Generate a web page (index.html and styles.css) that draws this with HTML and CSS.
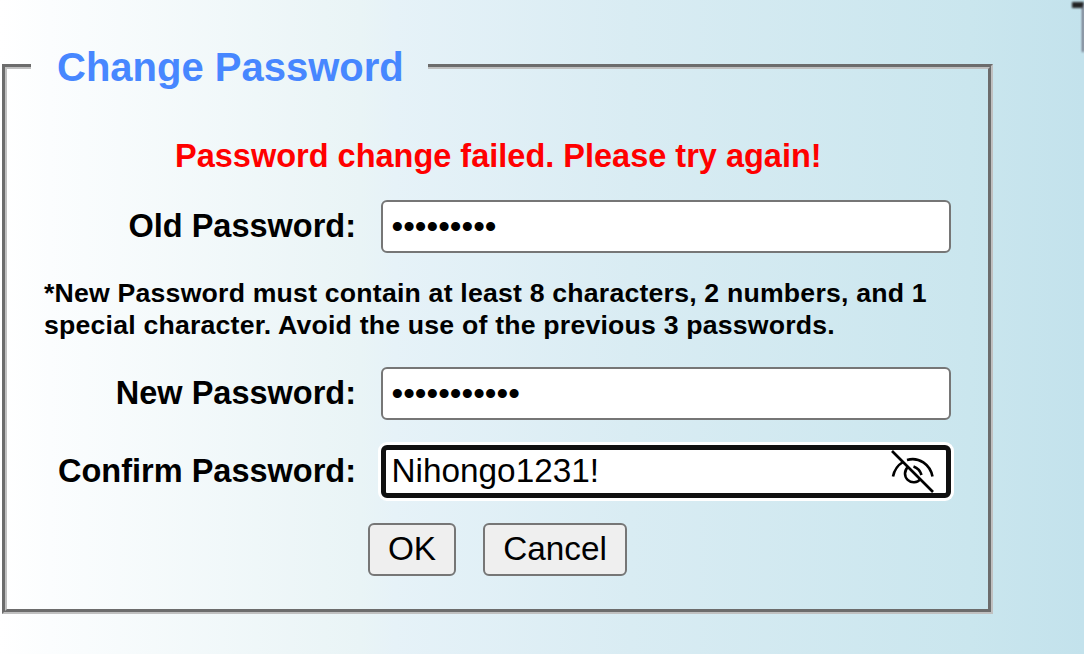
FILE: index.html
```html
<!DOCTYPE html>
<html lang="en">
<head>
<meta charset="utf-8">
<title>Change Password</title>
<link rel="stylesheet" href="styles.css">
</head>
<body>
<form class="page">
  <fieldset class="panel">
    <legend class="title"><span class="title-text">Change Password</span></legend>
    <p class="error"><span>Password change failed. Please try again!</span></p>
    <div class="row row-old">
      <label class="label" for="old">Old Password:</label>
      <input class="field" id="old" type="password" value="abcdefghi">
    </div>
    <p class="note">*New Password must contain at least 8 characters, 2 numbers, and 1<br>special character. Avoid the use of the previous 3 passwords.</p>
    <div class="row row-new">
      <label class="label" for="new">New Password:</label>
      <input class="field" id="new" type="password" value="abcdefghijk">
    </div>
    <div class="row row-confirm">
      <label class="label" for="confirm">Confirm Password:</label>
      <div class="field focused">
        <input class="bare" id="confirm" type="text" value="Nihongo1231!" spellcheck="false">
        <svg class="eye" viewBox="0 0 46 46" width="46" height="46" fill="none" stroke="#000" stroke-width="2.6">
          <path d="M3 2 L44 43"/>
          <path d="M4 27.500 C5.500 20 9 16 14 13"/>
          <path d="M18 11 C30 7.500 41 15.500 43.500 27.500"/>
          <path d="M19 18 A8.700 8.700 0 1 0 31.500 30"/>
          <path d="M24.500 17.500 Q30.500 19.500 32.500 26"/>
        </svg>
      </div>
    </div>
    <div class="actions">
      <button class="button ok" type="button">OK</button>
      <button class="button cancel" type="button">Cancel</button>
    </div>
  </fieldset>
  <div class="edge-mark"></div>
</form>
</body>
</html>
```
FILE: styles.css
```css
* { box-sizing: border-box; }

body {
  margin: 0;
  width: 1084px;
  height: 654px;
  overflow: hidden;
  font-family: "Liberation Sans", Arial, sans-serif;
  background: linear-gradient(90deg, #fff 0, #fbfdfe 50px, #e9f4f6 360px, #e6f2f8 395px, #d9ecf3 630px, #cae6ee 970px, #c3e2ec 1084px);
}

.page { position: relative; padding: 44px 0 0 2px; }

.panel {
  width: 991px;
  height: 570px;
  margin: 0;
  padding: 0;
  border: 5px groove #c0c0c0;
}

.title {
  width: 397px;
  height: 45px;
  margin-left: 24px;
  padding-left: 26px;
  color: #4787ff;
  font-size: 40px;
  font-weight: bold;
  line-height: 46px;
  white-space: nowrap;
}

.error {
  margin: 47px 0 0 168px;
  height: 40px;
  color: #f00;
  font-size: 32.5px;
  font-weight: bold;
  line-height: 40px;
  white-space: nowrap;
}

.row { display: flex; align-items: center; height: 53px; }
.row-old { margin-top: 24px; }
.row-new { margin-top: 26px; }
.row-confirm { margin-top: 25px; }

.label {
  width: 349px;
  margin-right: 25px;
  text-align: right;
  font-size: 32.5px;
  font-weight: bold;
  white-space: nowrap;
}

.field {
  width: 570px;
  height: 53px;
  padding: 0 8.5px;
  border: 2px solid #767676;
  border-radius: 6px;
  background: #fff;
  color: #000;
  font: 33.33px "Liberation Sans", Arial, sans-serif;
}

.focused {
  display: flex;
  align-items: center;
  padding: 0 11px 0 5.5px;
  border: 5px solid #101010;
  box-shadow: 0 0 0 3px #fff;
}

.bare {
  flex: 1;
  min-width: 0;
  padding: 0 0 2px;
  border: 0;
  outline: 0;
  background: none;
  font: 33.33px "Liberation Sans", Arial, sans-serif;
}

.note {
  margin: 24px 0 0 37px;
  font-size: 26.67px;
  font-weight: bold;
  line-height: 32px;
  letter-spacing: 0.2px;
  white-space: nowrap;
}

.actions { display: flex; gap: 27px; margin: 25px 0 0 361px; }

.button {
  height: 53px;
  padding: 0 0 2px;
  border: 2px solid #767676;
  border-radius: 6px;
  background: #efefef;
  color: #000;
  font: 33.33px "Liberation Sans", Arial, sans-serif;
}
.ok { width: 88px; }
.cancel { width: 144px; }

.edge-mark {
  position: absolute;
  top: 2px;
  right: 0;
  width: 12px;
  height: 50px;
  border-top: 6px solid #222;
  border-right: 2px solid #667;
  filter: blur(0.8px);
}
```
